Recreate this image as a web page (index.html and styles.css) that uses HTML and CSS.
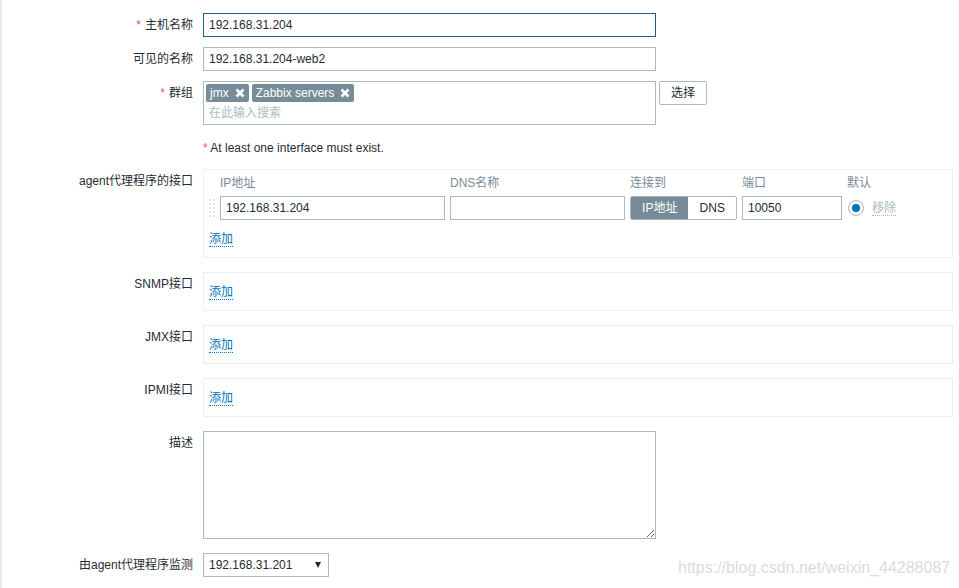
FILE: index.html
```html
<!DOCTYPE html>
<html lang="zh-CN">
<head>
    <meta charset="UTF-8">
    <title>主机</title>
    <link rel="stylesheet" href="styles.css">
</head>
<body>
    <div class="page">
        <ul class="form-list">
            <li class="form-row">
                <label class="form-label required">主机名称</label>
                <div class="form-field">
                    <input class="text-input focused" type="text" value="192.168.31.204">
                </div>
            </li>
            <li class="form-row">
                <label class="form-label">可见的名称</label>
                <div class="form-field">
                    <input class="text-input" type="text" value="192.168.31.204-web2">
                </div>
            </li>
            <li class="form-row row-groups">
                <label class="form-label required">群组</label>
                <div class="form-field field-inline">
                    <div class="multiselect">
                        <div class="tags">
                            <span class="tag">jmx
                                <svg class="tag-close" width="10" height="10" viewBox="0 0 10 10"><path d="M1.5 1.5 L8.5 8.5 M8.5 1.5 L1.5 8.5"/></svg>
                            </span>
                            <span class="tag">Zabbix servers
                                <svg class="tag-close" width="10" height="10" viewBox="0 0 10 10"><path d="M1.5 1.5 L8.5 8.5 M8.5 1.5 L1.5 8.5"/></svg>
                            </span>
                        </div>
                        <div class="ms-search">在此输入搜索</div>
                    </div>
                    <button class="btn-grey" type="button">选择</button>
                </div>
            </li>
            <li class="form-row row-error">
                <span class="form-label"></span>
                <div class="form-field error-note"><span class="asterisk">*</span> At least one interface must exist.</div>
            </li>
            <li class="form-row row-block">
                <label class="form-label">agent代理程序的接口</label>
                <div class="form-field">
                    <div class="iface-box">
                        <div class="iface-grid">
                            <span></span>
                            <span class="iface-head">IP地址</span>
                            <span class="iface-head">DNS名称</span>
                            <span class="iface-head">连接到</span>
                            <span class="iface-head">端口</span>
                            <span class="iface-head">默认</span>

                            <svg class="drag-handle" width="6" height="18" viewBox="0 0 6 18">
                                <rect x="0" y="0" width="2" height="2"/><rect x="4" y="0" width="2" height="2"/>
                                <rect x="0" y="4" width="2" height="2"/><rect x="4" y="4" width="2" height="2"/>
                                <rect x="0" y="8" width="2" height="2"/><rect x="4" y="8" width="2" height="2"/>
                                <rect x="0" y="12" width="2" height="2"/><rect x="4" y="12" width="2" height="2"/>
                                <rect x="0" y="16" width="2" height="2"/><rect x="4" y="16" width="2" height="2"/>
                            </svg>
                            <input class="text-input" type="text" value="192.168.31.204">
                            <input class="text-input" type="text" value="">
                            <div class="toggle">
                                <span class="toggle-opt active">IP地址</span>
                                <span class="toggle-opt">DNS</span>
                            </div>
                            <input class="text-input" type="text" value="10050">
                            <div class="iface-default">
                                <span class="radio"><span class="radio-dot"></span></span>
                                <a class="link-disabled">移除</a>
                            </div>
                        </div>
                        <a class="link-action add-link">添加</a>
                    </div>
                </div>
            </li>
            <li class="form-row row-block">
                <label class="form-label">SNMP接口</label>
                <div class="form-field">
                    <div class="iface-box empty"><a class="link-action">添加</a></div>
                </div>
            </li>
            <li class="form-row row-block">
                <label class="form-label">JMX接口</label>
                <div class="form-field">
                    <div class="iface-box empty"><a class="link-action">添加</a></div>
                </div>
            </li>
            <li class="form-row row-block">
                <label class="form-label">IPMI接口</label>
                <div class="form-field">
                    <div class="iface-box empty"><a class="link-action">添加</a></div>
                </div>
            </li>
            <li class="form-row row-block">
                <label class="form-label">描述</label>
                <div class="form-field">
                    <textarea class="textarea"></textarea>
                </div>
            </li>
            <li class="form-row">
                <label class="form-label">由agent代理程序监测</label>
                <div class="form-field">
                    <div class="select">
                        <span>192.168.31.201</span>
                        <span class="select-arrow"></span>
                    </div>
                </div>
            </li>
        </ul>
        <div class="watermark">https://blog.csdn.net/weixin_44288087</div>
    </div>
</body>
</html>
```

FILE: styles.css
```css
* {
    margin: 0;
    padding: 0;
    box-sizing: border-box;
}

body {
    font-family: 'Liberation Sans', 'Noto Sans CJK SC', sans-serif;
    font-size: 12px;
    line-height: 14px;
    color: #1f2c33;
    background: #fff;
}

.page {
    position: relative;
    height: 588px;
    border-left: 2px solid #e3e8eb;
    overflow: hidden;
}

.form-list {
    list-style: none;
    padding-top: 13px;
}

.form-row {
    display: grid;
    grid-template-columns: 191px 750px;
    column-gap: 10px;
    margin-bottom: 10px;
}

.row-groups {
    margin-bottom: 16px;
}

.row-error {
    margin-bottom: 14px;
}

.row-block {
    margin-bottom: 14px;
}

.form-label {
    text-align: right;
    padding-top: 5px;
    white-space: nowrap;
}

.required::before {
    content: '*';
    color: #e45959;
    margin-right: 4px;
}

.asterisk {
    color: #e45959;
}

.field-inline {
    display: flex;
    align-items: flex-start;
    gap: 3px;
}

.text-input {
    display: block;
    width: 453px;
    height: 24px;
    padding: 0 5px;
    border: 1px solid #acbbc2;
    border-radius: 0;
    font: inherit;
    color: #1f2c33;
    background: #fff;
    outline: none;
}

.text-input.focused {
    border-color: #1b5e8f;
}

/* multiselect for host groups */
.multiselect {
    width: 453px;
    height: 44px;
    border: 1px solid #acbbc2;
    padding: 2px;
}

.tags {
    display: flex;
    gap: 3px;
    height: 18px;
}

.tag {
    display: inline-flex;
    align-items: center;
    height: 18px;
    padding: 0 4px;
    background: #768d99;
    color: #fff;
    border-radius: 2px;
    line-height: 18px;
}

.tag-close {
    margin-left: 6px;
    stroke: #fff;
    stroke-width: 2.6;
    fill: none;
}

.ms-search {
    margin-top: 4px;
    padding-left: 3px;
    color: #acbbc2;
}

.btn-grey {
    width: 48px;
    height: 24px;
    border: 1px solid #acbbc2;
    border-radius: 2px;
    background: #fff;
    font: inherit;
    color: #1f2c33;
}

.error-note {
    height: 14px;
}

/* interface blocks */
.iface-box {
    border: 1px solid #ebeef0;
    padding: 6px 5px 10px;
}

.iface-box.empty {
    padding-top: 12px;
}

.iface-grid {
    display: grid;
    grid-template-columns: 6px 225px 175px 107px 100px auto;
    column-gap: 5px;
    row-gap: 6px;
    align-items: center;
}

.iface-grid .text-input {
    width: 100%;
}

.iface-head {
    color: #768d99;
}

.drag-handle {
    fill: #e3e8eb;
}

.toggle {
    display: flex;
    height: 24px;
    border: 1px solid #acbbc2;
    border-radius: 2px;
    overflow: hidden;
}

.toggle-opt {
    display: flex;
    align-items: center;
    justify-content: center;
    width: 48px;
}

.toggle-opt.active {
    width: 58px;
    background: #768d99;
    color: #fff;
}

.iface-default {
    display: flex;
    align-items: center;
    gap: 8px;
    padding-left: 1px;
}

.radio {
    display: flex;
    align-items: center;
    justify-content: center;
    width: 16px;
    height: 16px;
    border: 1px solid #acbbc2;
    border-radius: 50%;
}

.radio-dot {
    width: 8px;
    height: 8px;
    border-radius: 50%;
    background: #0275b8;
}

.link-disabled {
    color: #acbbc2;
    border-bottom: 1px dotted #acbbc2;
}

.link-action {
    display: inline-block;
    color: #0275b8;
    border-bottom: 1px dotted #0275b8;
    cursor: pointer;
}

.add-link {
    margin-top: 12px;
}

.textarea {
    display: block;
    width: 453px;
    height: 108px;
    border: 1px solid #acbbc2;
    resize: vertical;
    font: inherit;
    padding: 4px 5px;
    outline: none;
}

.select {
    display: flex;
    align-items: center;
    justify-content: space-between;
    width: 126px;
    height: 24px;
    padding: 0 7px 0 5px;
    border: 1px solid #acbbc2;
}

.select-arrow {
    width: 0;
    height: 0;
    border-left: 3px solid transparent;
    border-right: 3px solid transparent;
    border-top: 6px solid #1f2c33;
}

.watermark {
    position: absolute;
    left: 676px;
    top: 559px;
    font-size: 16px;
    line-height: 18px;
    color: #dcdcdc;
}
```
